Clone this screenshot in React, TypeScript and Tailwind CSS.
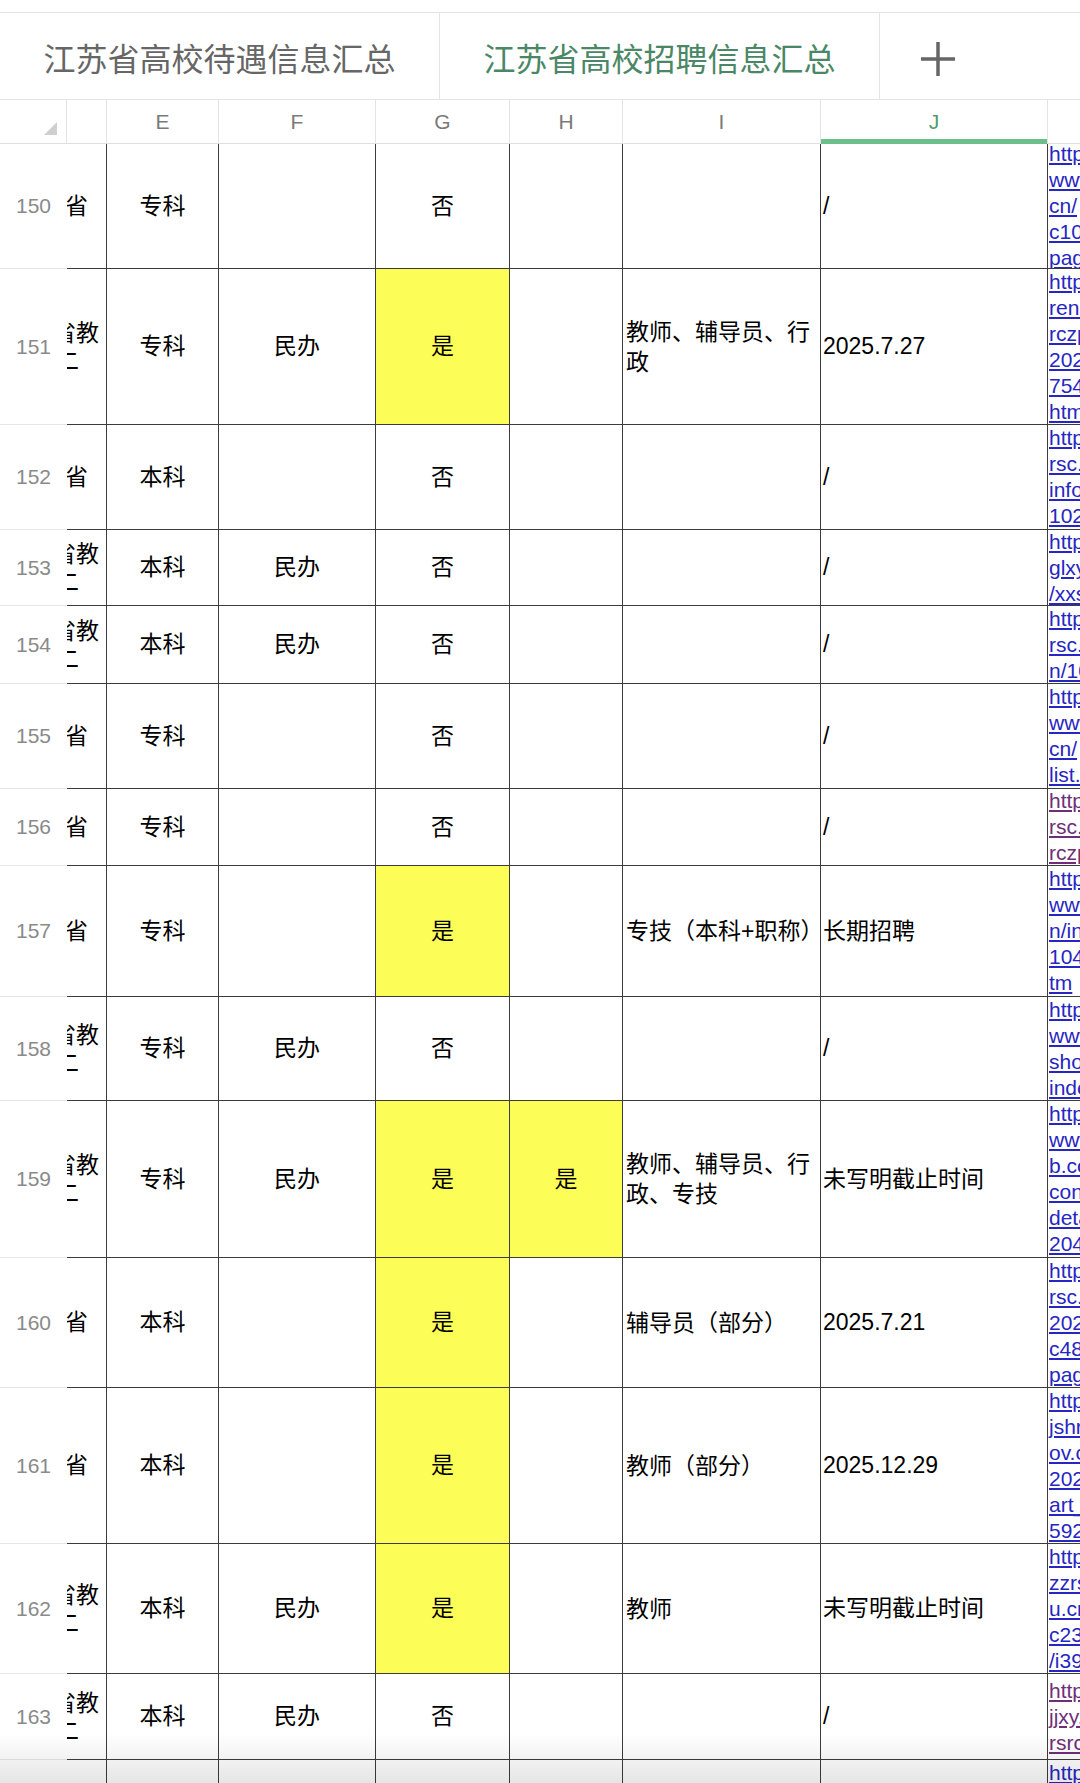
type Row = {
  n: number;
  h: string;
  e: string;
  f?: string;
  g: string;
  hv?: string;
  i?: string[];
  j: string;
  k: string[];
  visited?: boolean;
};

const rows: Row[] = [
  { n: 150, h: "h-[125px]", e: "专科", g: "否", j: "/", k: ["https://", "www.jsafc.edu.", "cn/", "c1052/list", "page.htm"] },
  { n: 151, h: "h-[156px]", e: "专科", f: "民办", g: "是", i: ["教师、辅导员、行", "政"], j: "2025.7.27", k: ["https://", "renshi.wxit.", "rczp/", "2025/0614/", "754.", "html"] },
  { n: 152, h: "h-[105px]", e: "本科", g: "否", j: "/", k: ["https://", "rsc.njtc.edu.", "info/", "1021/"] },
  { n: 153, h: "h-[76px]", e: "本科", f: "民办", g: "否", j: "/", k: ["https://", "glxy.jsou.", "/xxsz/"] },
  { n: 154, h: "h-[78px]", e: "本科", f: "民办", g: "否", j: "/", k: ["https://", "rsc.jsmc.edu.c", "n/1017/"] },
  { n: 155, h: "h-[105px]", e: "专科", g: "否", j: "/", k: ["https://", "www.jsvc.edu.", "cn/", "list.htm"] },
  { n: 156, h: "h-[77px]", e: "专科", g: "否", j: "/", k: ["https://", "rsc.jssc.edu.", "rczp/"], visited: true },
  { n: 157, h: "h-[131px]", e: "专科", g: "是", i: ["专技（本科+职称）"], j: "长期招聘", k: ["https://", "www.sit.edu.c", "n/info/", "1045/", "tm"] },
  { n: 158, h: "h-[104px]", e: "专科", f: "民办", g: "否", j: "/", k: ["https://", "www.jsxy.", "show/", "index/"] },
  { n: 159, h: "h-[157px]", e: "专科", f: "民办", g: "是", hv: "是", i: ["教师、辅导员、行", "政、专技"], j: "未写明截止时间", k: ["https://", "www.zhaopin", "b.com/", "content/", "detail/", "2045"] },
  { n: 160, h: "h-[130px]", e: "本科", g: "是", i: ["辅导员（部分）"], j: "2025.7.21", k: ["https://", "rsc.njit.", "2025/", "c4810/", "page.htm"] },
  { n: 161, h: "h-[156px]", e: "本科", g: "是", i: ["教师（部分）"], j: "2025.12.29", k: ["https://", "jshrss.jiangsu.g", "ov.cn/", "2025/", "art_", "5923"] },
  { n: 162, h: "h-[130px]", e: "本科", f: "民办", g: "是", i: ["教师"], j: "未写明截止时间", k: ["https://", "zzrsc.", "u.cn/", "c2301", "/i3900"] },
  { n: 163, h: "h-[86px]", e: "本科", f: "民办", g: "否", j: "/", k: ["https://", "jjxy.", "rsrc/"], visited: true },
  { n: 164, h: "h-[130px]", e: "", g: "", j: "", k: ["https://", "www.", "cn/", "c1", "pag"] },
];

const dark = "border-[#3c3c3c]";

function DCell({ row }: { row: Row }) {
  const two = row.f === "民办";
  return (
    <div className={`flex w-[40px] shrink-0 items-center overflow-hidden border-r border-b ${dark}`}>
      {row.n === 164 ? null : two ? (
        <div className="ml-[-14px] leading-[28px] whitespace-nowrap">
          <div>省教</div>
          <div className="ml-[3px]">二</div>
        </div>
      ) : (
        <div className="ml-[-2px] whitespace-nowrap">省</div>
      )}
    </div>
  );
}

function GridRow({ row }: { row: Row }) {
  const gy = row.g === "是";
  const hy = row.hv === "是";
  return (
    <div className={`flex ${row.h}`}>
      <div className="flex w-[67px] shrink-0 items-center justify-center border-b border-[#e6e6e6] text-[21px] text-[#8a8a8a]">
        {row.n === 164 ? "" : row.n}
      </div>
      <DCell row={row} />
      <div className={`flex w-[112px] shrink-0 items-center justify-center border-r border-b ${dark}`}>{row.e}</div>
      <div className={`flex w-[157px] shrink-0 items-center justify-center border-r border-b ${dark}`}>{row.f}</div>
      <div className={`flex w-[134px] shrink-0 items-center justify-center border-r border-b ${dark} ${gy ? "bg-[#fdfd58]" : ""}`}>{row.g}</div>
      <div className={`flex w-[113px] shrink-0 items-center justify-center border-r border-b ${dark} ${hy ? "bg-[#fdfd58]" : ""}`}>{row.hv}</div>
      <div className={`flex w-[198px] shrink-0 items-center border-r border-b pl-[3px] leading-[30px] ${dark}`}>
        <div>
          {(row.i ?? []).map((l) => (
            <div key={l} className="whitespace-nowrap">{l}</div>
          ))}
        </div>
      </div>
      <div className={`flex w-[227px] shrink-0 items-center border-r border-b pl-[2px] whitespace-nowrap ${dark}`}>{row.j}</div>
      <div className={`flex w-[32px] shrink-0 items-center overflow-hidden border-b pl-[1px] ${dark}`}>
        <div className={`text-[21px] leading-[26px] whitespace-nowrap underline ${row.visited ? "text-[#6e2f78]" : "text-[#2626c2]"}`}>
          {row.k.map((l, idx) => (
            <div key={idx}>{l}</div>
          ))}
        </div>
      </div>
    </div>
  );
}

export default function App() {
  const cols = ["E", "F", "G", "H", "I", "J"];
  const widths = ["w-[112px]", "w-[157px]", "w-[134px]", "w-[113px]", "w-[198px]", "w-[227px]"];
  return (
    <div className="relative h-[1783px] w-[1080px] overflow-hidden bg-white font-['Liberation_Sans','Noto_Sans_CJK_SC',sans-serif] text-[23px] text-black">
      <div className="h-[12px] bg-white" />
      <div className="flex h-[88px] border-y border-[#e4e4e4]">
        <div className="flex w-[440px] shrink-0 items-center justify-center border-r border-[#e4e4e4] pt-[8px] text-[32px] text-[#666666]">
          江苏省高校待遇信息汇总
        </div>
        <div className="flex w-[440px] shrink-0 items-center justify-center border-r border-[#e4e4e4] pt-[8px] text-[32px] text-[#4a8766]">
          江苏省高校招聘信息汇总
        </div>
        <div className="flex flex-1 items-center pt-[6px] pl-[41px]">
          <svg width="34" height="34" viewBox="0 0 34 34">
            <path d="M17 0V34M0 17H34" stroke="#666666" strokeWidth="3.5" />
          </svg>
        </div>
      </div>
      <div className="flex h-[44px] border-b border-[#e0e0e0] text-[21px] font-light text-[#7a7a7a]">
        <div className="relative w-[67px] shrink-0 border-r border-[#e4e4e4]">
          <svg className="absolute top-[22px] left-[44px]" width="13" height="13" viewBox="0 0 13 13">
            <path d="M13 0V13H0Z" fill="#cfcfcf" />
          </svg>
        </div>
        <div className="w-[40px] shrink-0 border-r border-[#e4e4e4]" />
        {cols.map((c, idx) => (
          <div
            key={c}
            className={`relative flex shrink-0 ${widths[idx]} items-center justify-center border-r border-[#e4e4e4] ${c === "J" ? "text-[#4f9a6d]" : ""}`}
          >
            {c}
            {c === "J" && <div className="absolute right-0 bottom-[-1px] left-0 h-[5px] bg-[#6cbf8b]" />}
          </div>
        ))}
        <div className="flex-1" />
      </div>
      <div>
        {rows.map((r) => (
          <GridRow key={r.n} row={r} />
        ))}
      </div>
      <div className="pointer-events-none absolute right-0 bottom-0 left-0 h-[50px] bg-linear-to-b from-transparent to-black/10" />
    </div>
  );
}
